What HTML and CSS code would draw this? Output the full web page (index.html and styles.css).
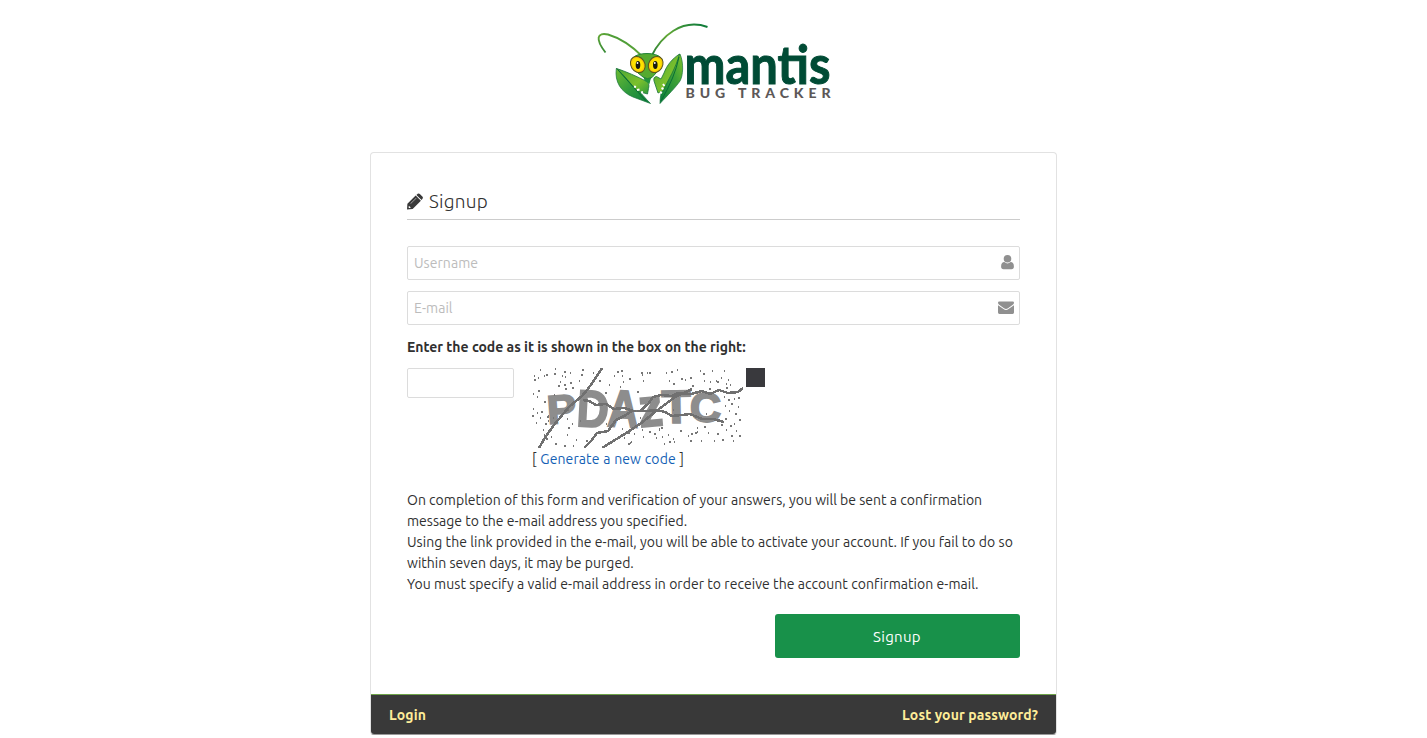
FILE: index.html
```html
<!DOCTYPE html>
<html lang="en">
<head>
<meta charset="utf-8">
<title>Signup - MantisBT</title>
<link rel="stylesheet" href="styles.css">
</head>
<body>
<main class="login-container">
  <div class="logo">
    <svg width="240" height="106" viewBox="595 0 240 106" role="img" aria-label="Mantis Bug Tracker">
      <defs>
        <linearGradient id="leaf" x1="0" y1="0" x2="1" y2="1"><stop offset="0" stop-color="#6dbb31"/><stop offset=".5" stop-color="#2f9a3c"/><stop offset="1" stop-color="#087c3c"/></linearGradient>
        <linearGradient id="leaf-right" x1="0" y1="1" x2="1" y2="0"><stop offset="0" stop-color="#087c3c"/><stop offset=".6" stop-color="#3da137"/><stop offset="1" stop-color="#7fc42b"/></linearGradient>
        <linearGradient id="antenna" x1="0" y1="1" x2="1" y2="0"><stop offset="0" stop-color="#207b36"/><stop offset=".5" stop-color="#65a936"/><stop offset="1" stop-color="#08783a"/></linearGradient>
        <linearGradient id="claw" x1="0" y1="0" x2="1" y2="1"><stop offset="0" stop-color="#4aa637"/><stop offset=".6" stop-color="#7cc02c"/><stop offset="1" stop-color="#2d9b3b"/></linearGradient>
        <radialGradient id="eye"><stop offset="0" stop-color="#fff000"/><stop offset=".7" stop-color="#fde000"/><stop offset="1" stop-color="#efb50b"/></radialGradient>
      </defs>
      <path d="M605.500 52.500C595 39 597 32 608 34.500C620 38 633 47 643 57" fill="none" stroke="url(#antenna)" stroke-width="1.900"/>
      <path d="M651 57C661 36 682 18 707.500 27" fill="none" stroke="url(#antenna)" stroke-width="1.900"/>
      <path d="M616.300 68.500C614.500 82 621 92 633 97L650.500 103.500C645 98 640 92 637 88C631 80 624 74 616.300 68.500Z" fill="url(#leaf)" stroke="#16723a" stroke-width=".7"/>
      <path d="M616.500 68.500C625 71 638 77 646 81Q650 83 648.500 88.500L647.500 94L637 91C630 83 625 76 616.500 68.500Z" fill="url(#claw)" stroke="#16723a" stroke-width=".8"/>
      <path d="M618 70L646 101" fill="none" stroke="#086d35" stroke-width="1"/>
      <path d="M660 103.500C660 93 664 82 667 74C670 66 674 59 680 54C684 63 683 76 680 81C676 87 668 95 660 103.500Z" fill="url(#leaf-right)" stroke="#16723a" stroke-width=".7"/>
      <path d="M679.500 54C672 59 667 65 664 73L661 79L656.500 76.500Q653 77 654 81L658 93L663 91C668 80 676 68 679.500 54Z" fill="url(#claw)" stroke="#16723a" stroke-width=".8"/>
      <path d="M679 57Q675 77 661 101" fill="none" stroke="#086d35" stroke-width="1"/>
      <path d="M634 86.500l2 .5M637 90l2.500-.5M641 92.500l2-.5M663 84l1.500 2M661.500 88l2 1M660 92l2 1" fill="none" stroke="#fff" stroke-width="2"/>
      <path d="M643 75L652.500 75Q650 80 649.500 84L644.500 80.500Z" fill="#22943b"/>
      <path d="M633 58C637 52 657 52 661 58Q663 66 656 73L652 77.500Q647 80 643 77L638 73Q631 66 633 58Z" fill="#55aa30" stroke="#23833a" stroke-width="1"/>
      <ellipse cx="637.800" cy="64.500" rx="6.900" ry="8.500" fill="url(#eye)" stroke="#58571d" stroke-width="1" transform="rotate(-32 637.800 64.500)"/>
      <ellipse cx="655.700" cy="64.500" rx="6.900" ry="8.500" fill="url(#eye)" stroke="#58571d" stroke-width="1" transform="rotate(32 655.700 64.500)"/>
      <ellipse cx="638" cy="65" rx="2.300" ry="3.900" fill="#191b10"/><ellipse cx="655.300" cy="65" rx="2.300" ry="3.900" fill="#191b10"/>
      <circle cx="637.500" cy="63" r=".9" fill="#fff"/><circle cx="654.800" cy="63" r=".9" fill="#fff"/>
      <text class="logo-name" x="684.500" y="83.500" textLength="146" lengthAdjust="spacingAndGlyphs">mantis</text>
      <text class="logo-sub" x="685.500" y="97.500" textLength="145" lengthAdjust="spacing">BUG TRACKER</text>
    </svg>
  </div>

  <section class="signup-box">
    <div class="widget-main">
      <h4 class="header"><svg class="pencil" width="16" height="17" viewBox="0 0 17 17"><path fill="#393939" fill-rule="evenodd" d="M0 17L.4 11L9.200 2.200L14.800 7.800L6 16.600L0 17ZM1.700 13.700L1.500 14.700L2.400 15.500L3.500 15.300L3.800 14.400L2.900 14.200L2.700 13.300ZM4 11L10 5L9.700 4.700L3.700 10.700Z"/><path fill="#393939" d="M10 1.500L11.400.3Q12.600-.5 13.900.7L16.300 3.100Q17.400 4.200 16.500 5.500L15.500 7Z"/></svg><span>Signup</span></h4>
      <form class="signup-form">
        <label class="field"><input type="text" placeholder="Username"><svg class="field-icon" width="18" height="16" viewBox="0 0 18 16"><path fill="#909090" d="M10.500 0a3.800 3.800 0 1 1 0 7.600a3.800 3.800 0 0 1 0-7.600ZM7.400 7Q10.500 9.800 13.600 7Q16.900 7.200 16.900 11.500Q16.900 14.300 14.500 14.300H6.500Q4.100 14.300 4.100 11.500Q4.100 7.200 7.400 7Z"/></svg></label>
        <label class="field"><input type="text" placeholder="E-mail"><svg class="field-icon" width="18" height="16" viewBox="0 0 18 16"><path fill="#909090" d="M2.200 1.500H15.800Q17 1.500 17 2.700Q17 4 15.500 5L11 8.200Q9 9.700 7 8.200L2.500 5Q1 4 1 2.700Q1 1.500 2.200 1.500ZM1 5.200L6.500 9.100Q9 11 11.500 9.100L17 5.200V12.600Q17 14 15.600 14H2.400Q1 14 1 12.600Z"/></svg></label>
        <label class="captcha-label" for="captcha">Enter the code as it is shown in the box on the right:</label>
        <div class="captcha-row">
          <input id="captcha" class="captcha-input" type="text">
          <div class="captcha-side">
            <div class="captcha-media">
              <svg width="214" height="80" viewBox="531 368 214 80" shape-rendering="crispEdges">
                <g class="captcha-text">
                  <text transform="translate(548 424) rotate(-4)" font-size="40" textLength="29" lengthAdjust="spacingAndGlyphs">P</text>
                  <text transform="translate(576 426) rotate(3)" font-size="52" textLength="32" lengthAdjust="spacingAndGlyphs">D</text>
                  <text transform="translate(607 426) rotate(3)" font-size="52" textLength="31" lengthAdjust="spacingAndGlyphs">A</text>
                  <text transform="translate(640 427) rotate(-5)" font-size="54" textLength="24" lengthAdjust="spacingAndGlyphs">z</text>
                  <text transform="translate(662 423) rotate(-1)" font-size="46" textLength="29" lengthAdjust="spacingAndGlyphs">T</text>
                  <text transform="translate(690 422)" font-size="43" textLength="31" lengthAdjust="spacingAndGlyphs">C</text>
                </g>
                <g fill="none" stroke="#707070" stroke-width="2.500">
                  <path d="M539 448C548 431 558 420 570 406L582 396Q591 386 602 368"/>
                  <path d="M583 400L589 401L596 405L606 404L614 409L624 408L634 411L646 411L657 410L665 412L672 416L682 415L690 414L702 419L713 419L724 422"/>
                  <path d="M584 448L591 441L597 433L608 431L616 420L624 416L632 411L640 411L648 404L653 397L661 395L672 396L678 393L691 394L702 391L710 394L719 390L728 393L738 392L743 388"/>
                  <path d="M602 448L623 435L640 424L655 412L675 397L692 389"/>
                </g>
                <path stroke="#777" stroke-width="1.700" d="M540 370h1m5 5h2m6-1h2m-1-5h1m8 3h2m4 1h1m10 2h2m-1-5h2m9 3h1M534 376h1m3 2h1m-5 2h2m8-4h1m20 1h1m4 6h2m-14 3h2m5 3h2m-29 2h2m14 4h1m-18 2h1m-9-8h1M533 394h1m10 8h2m-5 10h1m-10 4h2m3-3h1m-5-4h1m8 3h1m4 5h2m-13 6h1m8 1h2m1-3h1M543 430h1m2 5h1m-1 4h2m7 5h2m-6-7h1m16-9h2m-3 7h1m8 5h1m9 1h2m-24 5h2m7 0h1m-31-7h1M560 382h1m3 3h2m-4-9h1m9 12h2m5-7h1m7 8h1m11-8h2m8 4h1m-5 8h2m15-17h1m-6-4h2m4 10h1M621 371h2m-9 5h1m14 3h2m-11 8h1m16 5h2m2-19h2m4 0h1m-5 8h1M642 375h1m6-2h2m15 0h1m4-1h2m4-2h1m3 9h2m7-1h2m8-7h1m2 3h2m7-3h1m8 7h1m-5 4h2m7 2h1m-3-13h1m3 9h1M669 381h1m3 3h2m10-4h1m6 6h2m10-5h1m5 1h1m-2 7h2m5-8h1m9 7h2m2-3h1M724 397h1m3 3h2m4-1h1m3-1h2m-9 6h2m5 3h1m-4 7h2m2 6h2m-7 4h1m-10-5h2m2-8h1m-5-5h1M721 425h2m3 5h1m3-4h2m4 5h1m2 5h2m-8 5h1m-3-5h2m-11 4h2m-7-6h2m-11-1h1m-5-6h2m8 14h1M697 428h1m-3 5h2m-9 3h1m1 5h2m-1-7h2m4-2h1m3 9h1M642 430h1m6 2h2m-8 5h1m10-3h2m6 3h1m-4-8h1m4 15h1m3-9h1m-8-7h2m6 14h2m2-3h1m6-8h2m-26 7h1m2-8h1m14 12h1M628 433h2m-6 5h1m3 6h2m-13-6h1m16-4h1m-4 8h1m-10-13h1m7 14h1M548 416h1m4 2h1m13 1h1m4 5h1m-5-14h1m-29 8h1m3 17h1m35-14h1m25 3h1m29-13h1m3 7h1m32-8h1m32 4h1"/>
              </svg>
              <span class="captcha-player"></span>
            </div>
            <div class="captcha-refresh">[ <a href="#">Generate a new code</a> ]</div>
          </div>
        </div>
        <p class="info">On completion of this form and verification of your answers, you will be sent a confirmation<br>message to the e-mail address you specified.<br><span class="wide">Using the link provided in the e-mail, you will be able to activate your account. If you fail to do so</span><br>within seven days, it may be purged.<br><span class="wide">You must specify a valid e-mail address in order to receive the account confirmation e-mail.</span></p>
        <button class="btn" type="button">Signup</button>
      </form>
    </div>
    <nav class="toolbar"><a class="login" href="#">Login</a><a class="lost" href="#">Lost your password?</a></nav>
  </section>
</main>
</body>
</html>
```

FILE: styles.css
```css
* { box-sizing: border-box; }
body { margin: 0; height: 738px; overflow: hidden; background: #fff; color: #303030; font: 14px/21px Ubuntu, "Noto Sans", sans-serif; }
.login-container { width: 687px; margin: 0 auto; }
.logo { display: flex; justify-content: center; height: 152px; padding-left: 3px; }
.logo svg { overflow: visible; }
.logo-name { font: 700 53px Lato, sans-serif; fill: #004b35; stroke: #004b35; stroke-width: 1px; }
.logo-sub { font: 900 14px Lato, sans-serif; fill: #5d5858; }
.signup-box { height: 583px; border: 1px solid #e2e2e2; border-bottom-color: #999; border-radius: 4px; overflow: hidden; }
.widget-main { height: 541px; padding: 36px; }
.header { display: flex; align-items: center; gap: 6px; height: 31px; margin: 0 0 26px; padding-bottom: 6px; border-bottom: 1px solid #ccc; font-size: 19px; font-weight: 300; letter-spacing: .25px; }
.signup-form { display: flex; flex-direction: column; }
.field { position: relative; display: block; height: 34px; margin-bottom: 11px; }
input { border: 1px solid #dcdcdc; border-radius: 2px; font: inherit; background: #fff; outline: none; }
.field input { display: block; width: 100%; height: 34px; padding: 5px 6px; }
.field input::placeholder { color: #bcbcbc; opacity: 1; letter-spacing: .05px; }
.field-icon { position: absolute; right: 5px; top: 9px; }
.captcha-label { height: 32px; padding-top: 1px; font-weight: 700; letter-spacing: -.02px; white-space: nowrap; }
.captcha-row { display: flex; gap: 17px; height: 122px; }
.captcha-input { width: 107px; height: 30px; padding: 4px; }
.captcha-media { display: flex; height: 80px; gap: 1px; }
.captcha-player { width: 19px; height: 19px; background: #39393d; }
.captcha-text { font-family: "Liberation Sans", sans-serif; font-weight: 700; fill: #8d8d8d; stroke: #8d8d8d; stroke-width: 2px; }
.captcha-refresh { padding: 1px 0 0 1px; word-spacing: .4px; letter-spacing: .1px; white-space: nowrap; }
.captcha-refresh a { color: #145fb5; text-decoration: none; }
.info { height: 105px; margin: 0 0 19px; letter-spacing: .02px; white-space: nowrap; }
.wide { letter-spacing: .05px; }
.btn { align-self: flex-end; width: 245px; height: 44px; border: 0; border-radius: 3px; background: #18914a; color: #fff; font: 15px/44px Ubuntu, "Noto Sans", sans-serif; letter-spacing: .3px; padding: 1px 1px 0 0; }
.toolbar { display: flex; justify-content: space-between; height: 41px; padding: 10px 18px 0; border-top: 1px solid #6fa34a; background: #393939; }
.toolbar a { color: #fe9; font-weight: 700; letter-spacing: .12px; text-decoration: none; }
```
